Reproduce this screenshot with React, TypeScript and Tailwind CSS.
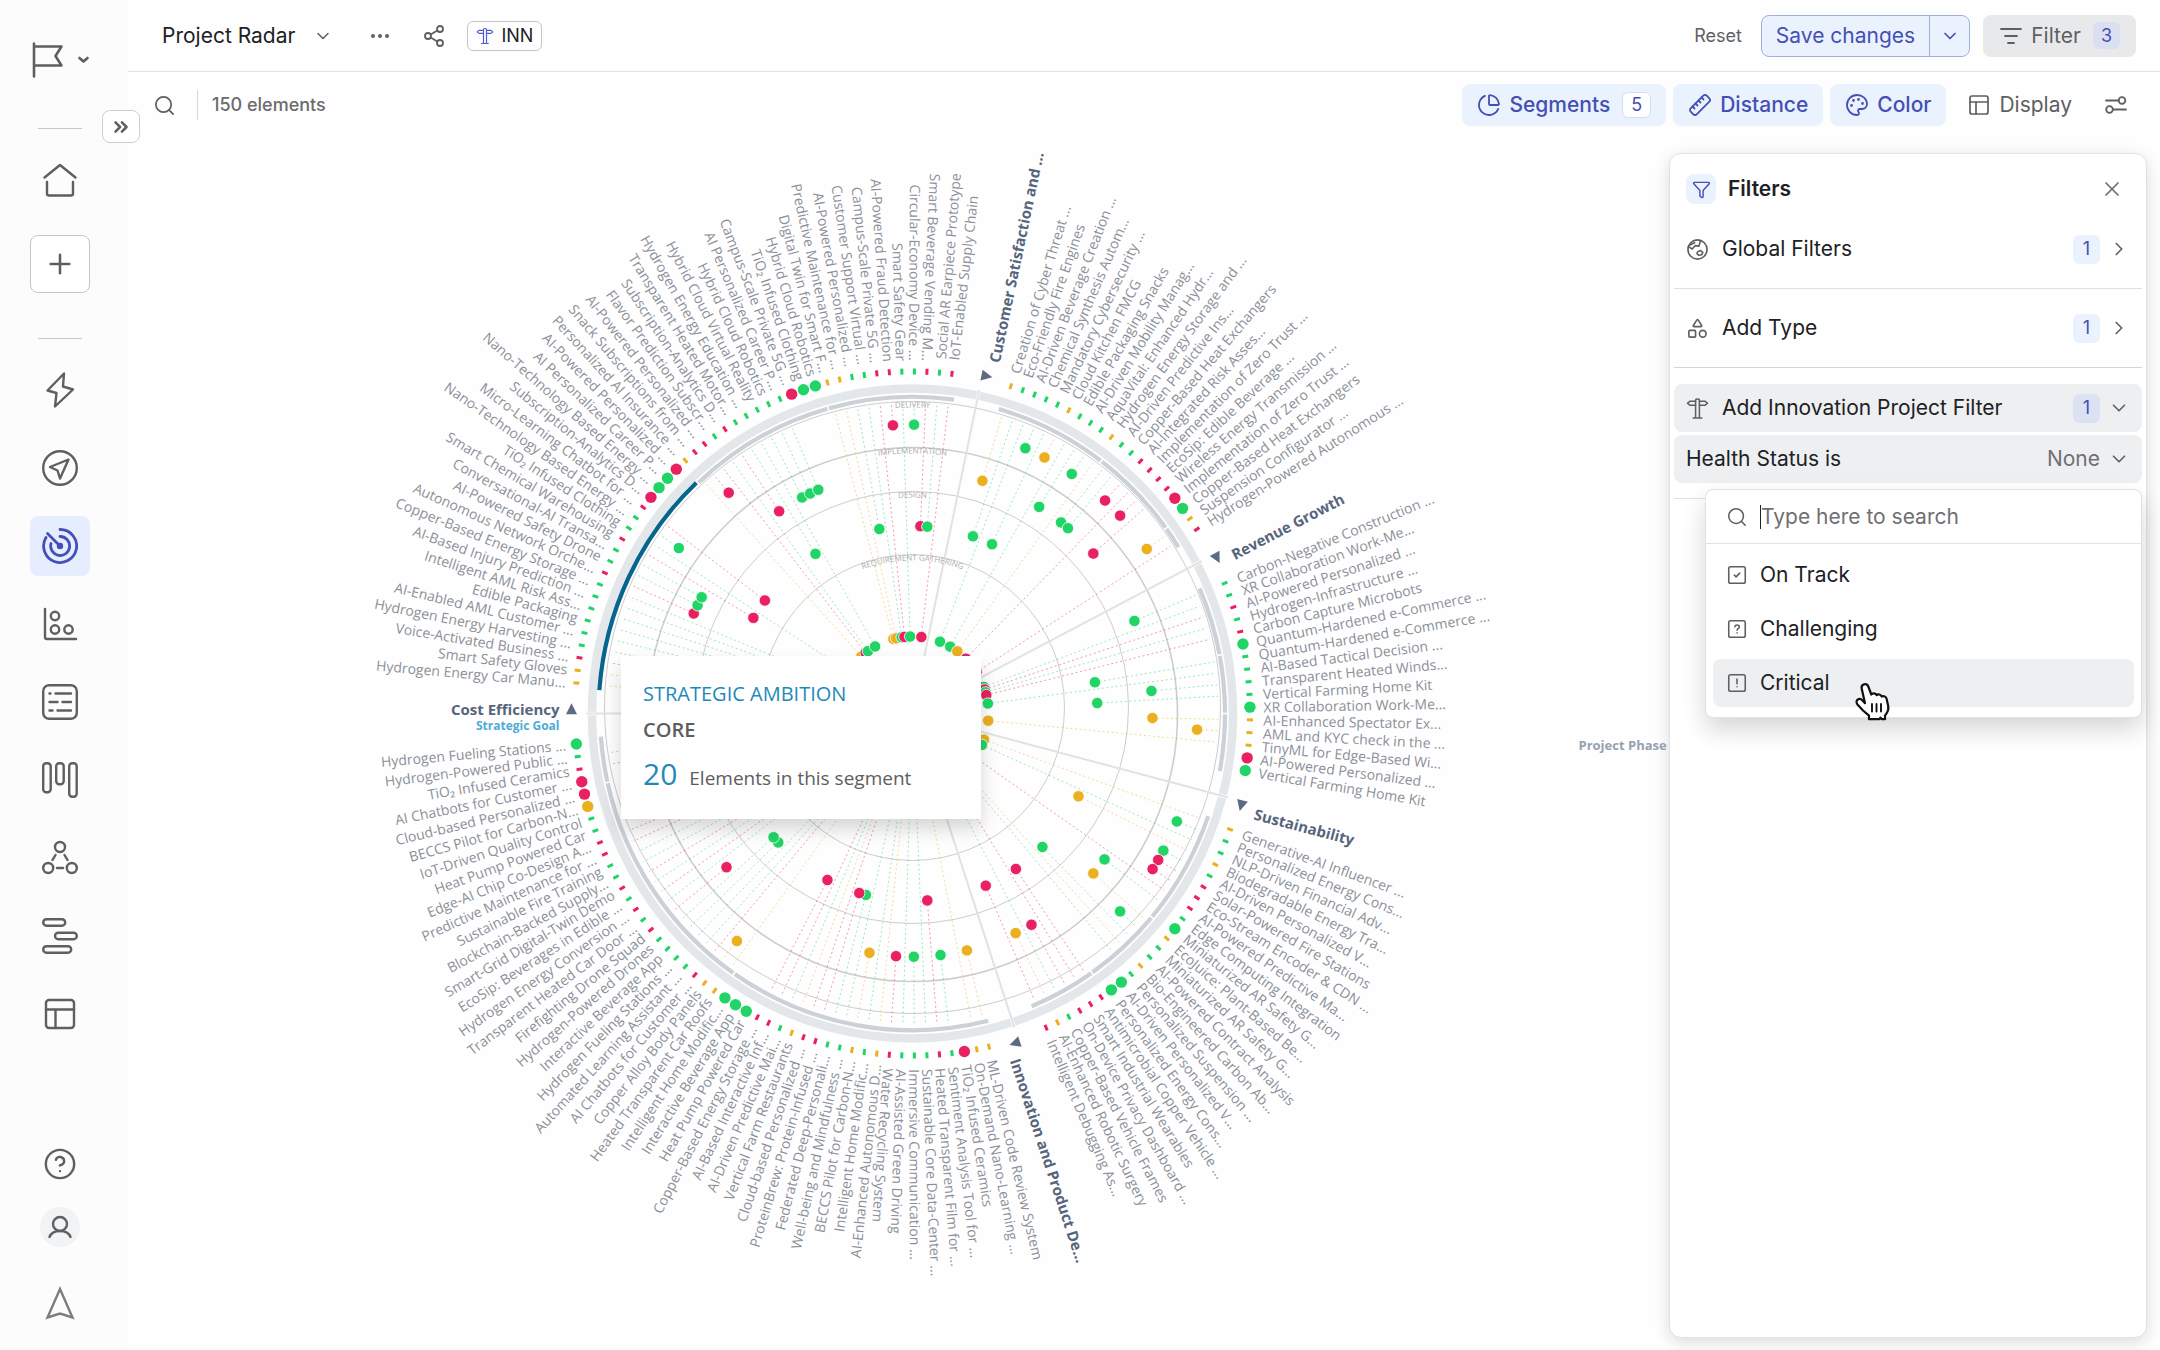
import type { ReactNode } from 'react'
import {
  ChartPie,
  ChevronDown,
  ChevronRight,
  ChevronsRight,
  CircleHelp,
  Ellipsis,
  Filter,
  ListFilter,
  Palette,
  PanelsTopLeft,
  Plus,
  Ruler,
  Search,
  Shapes,
  Share2,
  SquareCheck,
  X,
} from 'lucide-react'

/* ---------- data ---------- */

// status letter: g / r / y. Upper case = the element sits on the outer rim.
// depth: position of the element inside the radar (0 = centre cluster)
type Item = [label: string, status: string, depth?: number]

type Sector = {
  title: string
  splits: number[]
  items: Item[]
}

const DEPTHS = [76, 185, 240, 285]

const SECTORS: Sector[] = [
  {
    title: 'Cost Efficiency',
    splits: [20, 33],
    items: [
      ['Hydrogen Energy Car Manu...', 'y'],
      ['Smart Safety Gloves', 'y'],
      ['Voice-Activated Business ...', 'r'],
      ['Hydrogen Energy Harvesting ...', 'g'],
      ['AI-Enabled AML Customer ...', 'g'],
      ['Edible Packaging', 'g'],
      ['Intelligent AML Risk Ass...', 'g'],
      ['AI-Based Injury Prediction ...', 'g'],
      ['Copper-Based Energy Storage ...', 'g'],
      ['Autonomous Network Orche...', 'r', 2],
      ['AI-Powered Safety Drone', 'g', 2],
      ['Conversational-AI Transa...', 'g', 2],
      ['Smart Chemical Warehousing', 'r', 1],
      ['TiO₂ Infused Clothing', 'g'],
      ['Nano-Technology Based Energy ...', 'g', 3],
      ['Micro-Learning Chatbot for ...', 'r', 1],
      ['Subscription-Analytics D...', 'R'],
      ['Nano-Technology Based Energy ...', 'G'],
      ['AI Personalized Career P...', 'G'],
      ['AI-Powered Personalized ...', 'R'],
      ['Personalized AI Insurance ...', 'y'],
      ['Snack Subscriptions from ...', 'r', 3],
      ['AI-Powered Personalized ...', 'r'],
      ['Flavor Prediction Subscr...', 'g'],
      ['Subscription-Analytics D...', 'r', 2],
      ['Transparent Heated Motor...', 'g', 1],
      ['Hydrogen Energy Education ...', 'g'],
      ['Hybrid Cloud Virtual Reality', 'g', 2],
      ['Hybrid Cloud Robotics', 'g', 2],
      ['AI Personalized Career P...', 'g', 2],
      ['Campus-Scale Private 5G ...', 'R'],
      ['TiO₂ Infused Clothing', 'G'],
      ['Hybrid Cloud Robotics', 'G'],
      ['Digital Twin for Smart F...', 'y'],
      ['Predictive Maintenance for ...', 'y'],
      ['AI-Powered Personalized ...', 'g', 1],
      ['Customer Support Virtual ...', 'g'],
      ['Campus-Scale Private 5G ...', 'r'],
      ['AI-Powered Fraud Detection', 'r', 3],
      ['Smart Safety Gear', 'g'],
      ['Circular-Economy Device ...', 'g', 3],
      ['Smart Beverage Vending M...', 'r', 1],
      ['Social AR Earpiece Prototype', 'g', 1],
      ['IoT-Enabled Supply Chain', 'r'],
    ],
  },
  {
    title: 'Customer Satisfaction and ...',
    splits: [10, 18],
    items: [
      ['Creation of Cyber Threat ...', 'y', 2],
      ['Eco-Friendly Fire Engines', 'g', 1],
      ['AI-Driven Beverage Creation ...', 'g'],
      ['Chemical Synthesis Autom...', 'g', 3],
      ['Mandatory Cybersecurity ...', 'g', 1],
      ['Cloud Kitchen FMCG', 'y', 3],
      ['Edible Packaging Snacks', 'g'],
      ['AI-Driven Mobility Manag...', 'g', 2],
      ['AquaVital: Enhanced Hydr...', 'g', 3],
      ['Hydrogen Energy Storage and ...', 'y'],
      ['AI-Driven Predictive Ins...', 'g', 2],
      ['Copper-Based Heat Exchangers', 'g', 2],
      ['AI-Integrated Risk Asses...', 'r', 3],
      ['Implementation of Zero Trust ...', 'r'],
      ['EcoSip: Edible Beverage ...', 'r', 3],
      ['Wireless Energy Transmission ...', 'r', 2],
      ['Implementation of Zero Trust ...', 'R'],
      ['Copper-Based Heat Exchangers', 'G'],
      ['Suspension Configurator ...', 'y', 3],
      ['Hydrogen-Powered Autonomous ...', 'r'],
    ],
  },
  {
    title: 'Revenue Growth',
    splits: [6, 11],
    items: [
      ['Carbon-Negative Construction ...', 'g', 2],
      ['XR Collaboration Work-Me...', 'g'],
      ['AI-Powered Personalized ...', 'r'],
      ['Hydrogen-Infrastructure ...', 'g'],
      ['Carbon Capture Microbots', 'r'],
      ['Quantum-Hardened e-Commerce ...', 'G'],
      ['Quantum-Hardened e-Commerce ...', 'g', 1],
      ['AI-Based Tactical Decision ...', 'g'],
      ['Transparent Heated Winds...', 'g', 2],
      ['Vertical Farming Home Kit', 'g', 1],
      ['XR Collaboration Work-Me...', 'G'],
      ['AI-Enhanced Spectator Ex...', 'y', 2],
      ['AML and KYC check in the ...', 'y', 3],
      ['TinyML for Edge-Based Wi...', 'y'],
      ['AI-Powered Personalized ...', 'R'],
      ['Vertical Farming Home Kit', 'G'],
    ],
  },
  {
    title: 'Sustainability',
    splits: [10, 17],
    items: [
      ['Generative-AI Influencer ...', 'y'],
      ['Personalized Energy Cons...', 'g', 3],
      ['NLP-Driven Financial Adv...', 'g'],
      ['Biodegradable Energy Tra...', 'y', 1],
      ['AI-Driven Personalized V...', 'g', 3],
      ['Solar-Powered Fire Stations', 'r', 3],
      ['Eco-Stream Encoder & CDN ...', 'r', 3],
      ['AI-Powered Predictive Ma...', 'r'],
      ['Edge Computing Integration', 'g', 2],
      ['Miniaturized AR Safety G...', 'G'],
      ['EcoJuice: Plant-Based Be...', 'y', 2],
      ['Miniaturized AR Safety G...', 'g', 3],
      ['AI-Powered Contract Analysis', 'g', 1],
      ['Bio-Engineered Carbon Ab...', 'y'],
      ['Personalized Suspension ...', 'g'],
      ['AI-Driven Personalized V...', 'G'],
      ['Personalized Energy Cons...', 'G'],
      ['Antimicrobial Copper Vehicle ...', 'r', 1],
      ['Smart Industrial Wearables', 'r'],
      ['On-Device Privacy Dashboard ...', 'r', 2],
      ['Copper-Based Vehicle Frames', 'g'],
      ['AI-Enhanced Robotic Surgery', 'y', 2],
      ['Intelligent Debugging As...', 'r', 1],
    ],
  },
  {
    title: 'Innovation and Product De...',
    splits: [23, 43],
    items: [
      ['ML-Driven Code Review System', 'y', 2],
      ['On-Demand Nano-Learning ...', 'y'],
      ['TiO₂ Infused Ceramics', 'R'],
      ['Sentiment Analysis Tool for ...', 'g', 2],
      ['Heated Transparent Film for ...', 'r', 1],
      ['Sustainable Core Data-Center ...', 'g'],
      ['Immersive Communication ...', 'g', 2],
      ['AI-Assisted Green Driving', 'g'],
      ['Water Recycling System', 'r', 2],
      ['AI-Enhanced Autonomous D...', 'y'],
      ['Intelligent Home Modific...', 'g'],
      ['BECCS Pilot for Carbon-N...', 'y', 2],
      ['Well-being and Mindfulness ...', 'g'],
      ['Federated Deep-Personali...', 'g', 1],
      ['ProteinBrew: Protein-Infused ...', 'r', 1],
      ['Cloud-based Personalized ...', 'r'],
      ['Vertical Farm Restaurants', 'y'],
      ['AI-Driven Predictive Mai...', 'g'],
      ['AI-Based Interactive Inf...', 'r'],
      ['Copper-Based Energy Storage ...', 'r', 1],
      ['Heat Pump Powered Car', 'G'],
      ['Interactive Beverage App', 'G'],
      ['Intelligent Home Modific...', 'G'],
      ['Heated Transparent Car Roofs', 'y'],
      ['Copper Alloy Body Panels', 'y', 3],
      ['AI Chatbots for Customer ...', 'r'],
      ['Automated Learning Assistant ...', 'g'],
      ['Hydrogen Fueling Stations ...', 'g'],
      ['Interactive Beverage App', 'g', 1],
      ['Hydrogen-Powered Drones', 'g', 1],
      ['Firefighting Drone Squad', 'r', 2],
      ['Transparent Heated Car Door ...', 'g'],
      ['Hydrogen Energy Conversion ...', 'r'],
      ['EcoSip: Beverages in Edible ...', 'g'],
      ['Smart-Grid Digital-Twin Demo', 'r'],
      ['Blockchain-Backed Supply...', 'g'],
      ['Sustainable Fire Training', 'g'],
      ['Predictive Maintenance for ...', 'r'],
      ['Edge-AI Chip Co-Design A...', 'r'],
      ['Heat Pump Powered Car', 'g'],
      ['IoT-Driven Quality Control', 'g'],
      ['BECCS Pilot for Carbon-N...', 'Y'],
      ['Cloud-based Personalized ...', 'R'],
      ['AI Chatbots for Customer ...', 'R'],
      ['TiO₂ Infused Ceramics', 'r'],
      ['Hydrogen-Powered Public ...', 'g'],
      ['Hydrogen Fueling Stations ...', 'G'],
    ],
  },
]

const COLORS: Record<string, string> = { g: '#20d566', r: '#e92160', y: '#eab020' }

const RINGS = [
  { id: 'delivery', label: 'DELIVERY', cy: -6, rx: 308, ry: 306, width: 1 },
  { id: 'implementation', label: 'IMPLEMENTATION', cy: 1, rx: 265, ry: 267, width: 1.6 },
  { id: 'design', label: 'DESIGN', cy: -6, rx: 216, ry: 216, width: 1 },
  { id: 'requirement', label: 'REQUIREMENT GATHERING', cy: -6, rx: 152, ry: 153, width: 1 },
]

const OPTIONS = [
  { label: 'On Track', icon: <SquareCheck size={22} strokeWidth={1.7} /> },
  { label: 'Challenging', icon: <SquareMark mark="?" /> },
  { label: 'Critical', icon: <SquareMark mark="!" />, active: true },
]

/* ---------- radar ---------- */

const STEP = 360 / 169
const MARGIN = STEP * 2.4
const FLATTEN = 1.0135

function point(angle: number, radius: number) {
  const rad = (angle * Math.PI) / 180
  return { x: radius * Math.cos(rad), y: radius * FLATTEN * Math.sin(rad) }
}

function arc(from: number, to: number, radius: number) {
  const a = point(from, radius)
  const b = point(to, radius)
  const large = to - from > 180 ? 1 : 0
  return `M${a.x} ${a.y}A${radius} ${radius * FLATTEN} 0 ${large} 1 ${b.x} ${b.y}`
}

function layoutSectors() {
  let start = 180
  return SECTORS.map((sector) => {
    const first = start + MARGIN
    const end = first + (sector.items.length - 1) * STEP + MARGIN
    const placed = { ...sector, start, end, first }
    start = end
    return placed
  })
}

const PLACED = layoutSectors()

// labels left of a slightly tilted axis are flipped so that they stay readable
function isFlipped(angle: number) {
  const a = ((angle + 180) % 360) - 180
  return a < -86.5 || a > 95
}

function Radar() {
  const items = PLACED.flatMap((sector) =>
    sector.items.map(([label, status, depth], i) => ({
      label,
      rim: status !== status.toLowerCase(),
      color: COLORS[status.toLowerCase()],
      radius: DEPTHS[depth ?? 0],
      angle: sector.first + i * STEP,
    })),
  )

  return (
    <svg viewBox="-784.5 -573.5 1541 1210" className="h-full w-full font-['Open_Sans',sans-serif]" role="img" aria-label="Project Radar">
      {RINGS.map((ring) => (
        <g key={ring.id}>
          <ellipse cx={0} cy={ring.cy} rx={ring.rx} ry={ring.ry} fill="none" stroke="#cdcdcd" strokeWidth={ring.width} />
          <path
            id={`ring-${ring.id}`}
            d={`M${-ring.rx + 6} ${ring.cy}A${ring.rx - 6} ${ring.ry - 6} 0 0 1 ${ring.rx - 6} ${ring.cy}`}
            fill="none"
          />
        </g>
      ))}

      {/* dashed guides */}
      {items
        .filter((item) => !item.rim)
        .map((item, i) => {
          const a = point(item.angle, item.radius)
          const b = point(item.angle, 306)
          return (
            <line key={i} x1={a.x} y1={a.y} x2={b.x} y2={b.y} stroke={item.color} strokeWidth={1} strokeDasharray="2 2.6" opacity={0.45} />
          )
        })}

      {/* rim and inner segment arcs */}
      {PLACED.map((sector, s) => {
        const cuts = [0, ...sector.splits, sector.items.length]
        return (
          <g key={sector.title} fill="none">
            <path d={arc(sector.start + 0.3, sector.end - 0.3, 320.5)} stroke="#e3e7ea" strokeWidth={8.5} />
            {cuts.slice(1).map((cut, i) => {
              const active = s === 0 && i === 0
              const from = sector.first + (cuts[i] - 0.5) * STEP + 0.15
              const to = sector.first + (cut - 0.5) * STEP - 0.15
              return (
                <path key={cut} d={arc(from, to, active ? 314 : 312.5)} stroke={active ? '#06658f' : '#cbd1d6'} strokeWidth={4.2} />
              )
            })}
          </g>
        )
      })}
      {PLACED.map((sector) => {
        const b = point(sector.start, 326)
        return <line key={sector.title} x1={0} y1={0} x2={b.x} y2={b.y} stroke="#e1e2e4" strokeWidth={2} />
      })}

      {RINGS.map((ring) => (
        <text key={ring.id} fontSize={8} fill="#adadad" textAnchor="middle">
          <textPath href={`#ring-${ring.id}`} startOffset="50%">
            {ring.label}
          </textPath>
        </text>
      ))}

      {/* elements */}
      {items.map((item, i) => {
        const inner = point(item.angle, item.radius)
        const rim = point(item.angle, 337.5)
        return item.rim ? (
          <circle key={i} cx={rim.x} cy={rim.y} r={5.7} fill={item.color} />
        ) : (
          <g key={i}>
            <circle cx={inner.x} cy={inner.y} r={5.7} fill={item.color} stroke="#fff" strokeWidth={0.8} />
            <rect x={-3} y={-1.5} width={6} height={3} fill={item.color} transform={`translate(${rim.x} ${rim.y}) rotate(${item.angle})`} />
          </g>
        )
      })}

      {items.map((item, i) => {
        const flipped = isFlipped(item.angle)
        const p = point(item.angle, flipped ? 348 : 351)
        return (
          <text
            key={i}
            fontSize={14}
            fill="#8b9099"
            dominantBaseline="central"
            textAnchor={flipped ? 'end' : 'start'}
            transform={`translate(${p.x} ${p.y}) rotate(${flipped ? item.angle + 180 : item.angle})`}
          >
            {item.label}
          </text>
        )
      })}

      {/* sector titles */}
      {PLACED.map((sector, s) => {
        const marker = point(sector.start + 0.7, 341)
        const p = point(sector.start + (s === 0 ? 0.7 : 1.4), s === 0 ? 353 : 356)
        return (
          <g key={sector.title}>
            <path d="M-5 -5.5L6 0L-5 5.5Z" fill="#5d6b82" transform={`translate(${marker.x} ${marker.y}) rotate(${sector.start + 90})`} />
            <text
              fontSize={15}
              fontWeight={700}
              fill="#56647c"
              dominantBaseline="central"
              textAnchor={s === 0 ? 'end' : 'start'}
              transform={`translate(${p.x} ${p.y}) rotate(${s === 0 ? 0 : sector.start})`}
            >
              {sector.title}
            </text>
          </g>
        )
      })}
      <text x={-353} y={16} fontSize={12} fontWeight={700} fill="#4fabd5" textAnchor="end">
        Strategic Goal
      </text>
      <text x={666} y={36} fontSize={13} fontWeight={700} fill="#94a2b0">
        Project Phase
      </text>
    </svg>
  )
}

/* ---------- icons ---------- */

type SvgProps = { size?: number; width?: number; box?: string; stroke?: number; className?: string; children: ReactNode }

function Svg({ size = 36, width, box = '0 0 36 36', stroke = 2.4, className, children }: SvgProps) {
  return (
    <svg
      width={width ?? size}
      height={size}
      viewBox={box}
      fill="none"
      stroke="currentColor"
      strokeWidth={stroke}
      strokeLinecap="round"
      strokeLinejoin="round"
      className={className}
      aria-hidden="true"
    >
      {children}
    </svg>
  )
}

function SquareMark({ mark }: { mark: '?' | '!' }) {
  return (
    <Svg size={22} box="0 0 24 24" stroke={1.7}>
      <rect x="3" y="3" width="18" height="18" rx="2" />
      {mark === '?' ? (
        <path d="M9.600 9.600c.2-1.300 1.200-2 2.400-2 1.400 0 2.500.9 2.500 2.200 0 1.700-2.400 1.900-2.400 3.500M12.100 16.200v.1" />
      ) : (
        <path d="M12 7.800v5M12 16v.1" />
      )}
    </Svg>
  )
}

function SignpostIcon({ size = 22 }: { size?: number }) {
  return (
    <Svg size={size} box="0 0 24 24" stroke={1.6}>
      <path d="M10 22V3.500a1.500 1.500 0 0 1 1.500-1.500h1A1.500 1.500 0 0 1 14 3.500V22M7.500 22h9" />
      <path d="M10 4.500H4L1.500 6.500 4 8.500h6M14 4.500h6l2.500 2L20 8.500h-6" />
    </Svg>
  )
}

function GlobeIcon() {
  return (
    <Svg size={23} box="0 0 24 24" stroke={1.7}>
      <circle cx="12" cy="12" r="10" />
      <path d="M2.500 9l4 2.500 3-3.500 4 .5 1.500-5.500M3.500 7.500L9 5" />
      <path d="M12 14.500l3-1.500 2.500 2-1 2.500-3 .5-2-1.500z" />
    </Svg>
  )
}

const NAV_ICONS: { label: string; active?: boolean; icon: ReactNode }[] = [
  {
    label: 'Activity',
    icon: <Svg><path d="M22 1.500L5.500 18.500 14.500 21 13 34.500 31 17.500 21 14.500z" /></Svg>,
  },
  {
    label: 'Explore',
    icon: (
      <Svg>
        <circle cx="18" cy="18" r="16.800" />
        <path d="M26.500 9.500L8 17l7.500 3.500 2.500 8z" />
      </Svg>
    ),
  },
  {
    label: 'Radar',
    active: true,
    icon: (
      <Svg stroke={2.8}>
        <path d="M18 1.500a16.500 16.500 0 1 1-14 8M18 8.500a9.500 9.500 0 1 1-9 7" />
        <path d="M5.500 5.500L18 18" />
        <circle cx="18" cy="18" r="1.800" fill="currentColor" />
      </Svg>
    ),
  },
  {
    label: 'Bubble chart',
    icon: (
      <Svg>
        <path d="M3 3v28a2 2 0 0 0 2 2h29" />
        <circle cx="13" cy="10" r="4.200" />
        <circle cx="13" cy="23.500" r="4.200" />
        <circle cx="26.500" cy="23.500" r="4.200" />
      </Svg>
    ),
  },
  {
    label: 'List',
    icon: (
      <Svg>
        <rect x="1.200" y="1.200" width="33.600" height="33.600" rx="6" />
        <path d="M7.500 9.500h1M13.500 9.500h15.500M7.500 18h8M20.500 18h8.500M7.500 26.500h3M15.500 26.500h13.500" />
      </Svg>
    ),
  },
  {
    label: 'Board',
    icon: (
      <Svg>
        <rect x="1.200" y="1.200" width="7.500" height="29" rx="3" />
        <rect x="14.200" y="1.200" width="7.500" height="21" rx="3" />
        <rect x="27.200" y="1.200" width="7.500" height="33.600" rx="3" />
      </Svg>
    ),
  },
  {
    label: 'Network',
    icon: (
      <Svg>
        <circle cx="18" cy="7" r="5" />
        <circle cx="6.200" cy="28" r="5" />
        <circle cx="29.800" cy="28" r="5" />
        <path d="M13.500 15l-3 5M22.500 15l3 5M15 28h6" />
      </Svg>
    ),
  },
  {
    label: 'Timeline',
    icon: (
      <Svg>
        <rect x="1.200" y="1.200" width="22" height="6.500" rx="3.200" />
        <rect x="13" y="14.700" width="21.800" height="6.500" rx="3.200" />
        <rect x="1.200" y="28.200" width="28" height="6.500" rx="3.200" />
      </Svg>
    ),
  },
  {
    label: 'Dashboard',
    icon: (
      <Svg>
        <rect x="4" y="4" width="28" height="28" rx="3" />
        <path d="M4 13.500h28M13.500 13.500V32" />
      </Svg>
    ),
  },
]

/* ---------- layout ---------- */

function Sidebar() {
  return (
    <aside className="relative flex w-32 shrink-0 flex-col items-center bg-[#fcfcfd] pr-2 pb-[30px] text-[#5f5f62]">
      <button type="button" aria-label="Workspace" className="mt-9 flex h-12 items-center gap-[14px]">
        <Svg size={36} width={32} box="0 0 32 36" stroke={2.6}>
          <path d="M2 1.500v33M2 4.500h27.500l-6 9.500 6 9.500H2" />
        </Svg>
        <Svg size={8} width={11} box="0 0 11 8" stroke={2.6}>
          <path d="M1.500 2l4 3.500 4-3.500" />
        </Svg>
      </button>
      <div className="mt-11 h-px w-11 bg-[#c9c9cb]" />
      <a href="#home" aria-label="Home" className="mt-[21px] flex size-[60px] items-center justify-center">
        <Svg>
          <path d="M2.500 15.500L18 3l15.500 12.500M5 20v11.500a2 2 0 0 0 2 2h22a2 2 0 0 0 2-2V20" />
        </Svg>
      </a>
      <button
        type="button"
        aria-label="Create"
        className="mt-[25px] flex h-[58px] w-[60px] items-center justify-center rounded-lg border border-[#c6c6c8] bg-white"
      >
        <Plus size={32} strokeWidth={1.9} />
      </button>
      <div className="mt-[45px] h-px w-11 bg-[#c9c9cb]" />
      <nav className="mt-[21px] flex flex-col gap-[18px]">
        {NAV_ICONS.map((item) => (
          <a
            key={item.label}
            href="#view"
            aria-label={item.label}
            className={`flex size-[60px] items-center justify-center rounded-lg ${item.active ? 'bg-[#e6edfe] text-[#4350b8]' : ''}`}
          >
            {item.icon}
          </a>
        ))}
      </nav>
      <button type="button" aria-label="Help" className="mt-auto flex size-12 items-center justify-center">
        <CircleHelp size={34} strokeWidth={1.7} />
      </button>
      <button type="button" aria-label="Account" className="mt-[19px] flex size-10 items-center justify-center rounded-full bg-[#f1f3f4]">
        <Svg size={24} box="0 0 24 24" stroke={2.4}>
          <circle cx="12" cy="9" r="7" />
          <path d="M1.500 22c1.500-4 5-6 10.500-6s9 2 10.500 6" />
        </Svg>
      </button>
      <a href="#about" aria-label="About" className="mt-[39px]">
        <Svg size={34} width={30} box="0 0 30 34" stroke={2.4} className="text-[#7d7d80]">
          <path strokeLinejoin="miter" d="M15 3L2.500 31.500 15 27.500l12.500 4z" />
        </Svg>
      </a>
      <button
        type="button"
        aria-label="Expand sidebar"
        className="absolute top-[110px] left-[102px] flex h-[33px] w-[38px] items-center justify-center rounded-lg border border-[#cfcfd1] bg-white"
      >
        <ChevronsRight size={22} strokeWidth={2.8} />
      </button>
    </aside>
  )
}

function Header() {
  return (
    <header className="flex h-[72px] shrink-0 items-center border-b border-[#e3e3e5] pr-6 pl-[34px] text-[#5f5f62]">
      <button type="button" className="flex items-center gap-[18px] text-[21px] text-[#202124]">
        Project Radar
        <ChevronDown size={20} strokeWidth={1.8} className="text-[#5f5f62]" />
      </button>
      <button type="button" aria-label="More" className="ml-[35px]">
        <Ellipsis size={24} strokeWidth={2} />
      </button>
      <button type="button" aria-label="Share" className="ml-[30px]">
        <Share2 size={24} strokeWidth={1.8} />
      </button>
      <button type="button" className="ml-[21px] flex h-[30px] items-center gap-[7px] rounded-md border border-[#c6c6c8] px-2 text-lg text-[#202124]">
        <span className="text-[#4a5fc9]">
          <SignpostIcon size={18} />
        </span>
        INN
      </button>

      <button type="button" className="ml-auto text-lg">
        Reset
      </button>
      <div className="ml-[19px] flex h-[42px] rounded-lg border border-[#9fb0de] bg-[#eaf2fe] text-[#444fb5]">
        <button type="button" className="px-[14px] text-[21px]">
          Save changes
        </button>
        <button type="button" aria-label="More save options" className="flex w-10 items-center justify-center border-l border-[#9fb0de]">
          <ChevronDown size={20} strokeWidth={2} />
        </button>
      </div>
      <button type="button" className="ml-[13px] flex h-[42px] items-center gap-2 rounded-lg bg-[#e8e9eb] px-4 text-[21px]">
        <ListFilter size={24} strokeWidth={1.8} />
        Filter
        <span className="ml-1 rounded-md bg-[#dae0f2] px-2 text-lg leading-[27px] text-[#444fb5]">3</span>
      </button>
    </header>
  )
}

function Toolbar() {
  const chip = 'flex h-[42px] items-center gap-2 rounded-lg bg-[#eaf2fe] px-[15px] font-medium text-[#444fb5]'
  return (
    <div className="flex h-[68px] shrink-0 items-center pr-8 pb-[2px] pl-[25px] text-[#5f5f62]">
      <button type="button" aria-label="Search">
        <Search size={23} strokeWidth={1.8} />
      </button>
      <div className="ml-[21px] h-[30px] w-px bg-[#d8d8da]" />
      <span className="ml-[14px] text-lg font-medium text-[#6b6b6e]">150 elements</span>
      <div className="ml-auto flex items-center gap-[7px] text-[21px]">
        <button type="button" className={chip}>
          <ChartPie size={24} strokeWidth={1.8} />
          Segments
          <span className="ml-1 rounded-md border border-[#d3ddf3] bg-white px-2 text-lg leading-[24px] font-normal">5</span>
        </button>
        <button type="button" className={chip}>
          <Ruler size={24} strokeWidth={1.8} className="-scale-x-100" />
          Distance
        </button>
        <button type="button" className={chip}>
          <Palette size={24} strokeWidth={1.8} />
          Color
        </button>
        <button type="button" className="ml-[14px] flex items-center gap-2">
          <PanelsTopLeft size={24} strokeWidth={1.7} />
          Display
        </button>
        <button type="button" aria-label="Settings" className="ml-[25px]">
          <Svg size={24} box="0 0 24 24" stroke={1.8}>
            <path d="M2 7.500h12.500M9 16.500h13" />
            <circle cx="18" cy="7.500" r="3.300" />
            <circle cx="5.500" cy="16.500" r="3.300" />
          </Svg>
        </button>
      </div>
    </div>
  )
}

function Badge({ strong }: { strong?: boolean }) {
  return (
    <span className={`flex h-[29px] w-[27px] items-center justify-center rounded-md text-lg text-[#444fb5] ${strong ? 'bg-[#dbe2f4]' : 'bg-[#eaf2fe]'}`}>
      1
    </span>
  )
}

function FilterRow({ icon, label, open }: { icon: ReactNode; label: string; open?: boolean }) {
  return (
    <button
      type="button"
      aria-expanded={Boolean(open)}
      className={`flex h-12 w-full items-center rounded-lg px-3 text-left text-[21px] ${open ? 'bg-[#eeeff1]' : ''}`}
    >
      <span className="text-[#5f5f62]">{icon}</span>
      <span className="ml-[13px] flex-1 text-[#202124]">{label}</span>
      <Badge strong={open} />
      <span className="ml-2 text-[#5f5f62]">
        {open ? <ChevronDown size={22} strokeWidth={1.8} /> : <ChevronRight size={22} strokeWidth={1.8} />}
      </span>
    </button>
  )
}

function StatusMenu() {
  return (
    <div className="absolute top-full right-0 z-10 mt-[6px] w-[437px] rounded-lg border border-[#e1e2e4] bg-white shadow-[0_12px_24px_rgba(0,0,0,0.16)]">
      <label className="flex h-[54px] items-center gap-3 border-b border-[#e1e2e4] pl-5 text-[#5f5f62]">
        <Search size={22} strokeWidth={1.7} />
        <span className="flex flex-1 items-center">
          <span className="h-6 w-px bg-[#202124]" />
          <input
            type="text"
            placeholder="Type here to search"
            aria-label="Type here to search"
            className="w-full bg-transparent text-[21px] outline-none placeholder:text-[#6f6f72]"
          />
        </span>
      </label>
      <ul className="flex flex-col gap-[6px] px-[7px] pt-[7px] pb-[10px]">
        {OPTIONS.map((option) => (
          <li key={option.label}>
            <button
              type="button"
              className={`flex h-12 w-full items-center gap-3 rounded-lg pl-[13px] text-[21px] text-[#202124] ${option.active ? 'bg-[#eeeff1]' : ''}`}
            >
              <span className="text-[#5f5f62]">{option.icon}</span>
              {option.label}
            </button>
          </li>
        ))}
      </ul>
      {/* pointer */}
      <svg width="36" height="40" viewBox="0 0 36 40" className="absolute top-[192px] left-[149px]" aria-hidden="true">
        <path
          d="M8.500 2.500c2-1 4 0 4.800 2l3 8c1.200-1.800 4.500-1.500 5.300.6 1.500-1.400 4.300-.8 5 1.400 2-1 4.500 0 5 2.200l1.600 7.300c.6 3-.3 5.500-1.800 7.600l-1.400 2v3.600h-3.500l-1-1.500-1.500 1.500H14v-3.500L8 28.500l-5.500-6c-1.500-1.800-1.200-4 .3-5 1.500-.9 3.300-.5 4.700 1l2.500 2.700L6.800 7c-.6-2 .2-3.700 1.700-4.500z"
          fill="#fff"
          stroke="#111"
          strokeWidth="2.200"
          strokeLinejoin="round"
        />
        <path d="M17 22v7.500M21.500 22v7.500M26 22v7.500" stroke="#111" strokeWidth="1.900" strokeLinecap="round" />
      </svg>
    </div>
  )
}

function FilterPanel() {
  return (
    <aside className="mt-[13px] mr-[13px] mb-3 w-[478px] shrink-0 rounded-xl border border-[#e1e2e4] bg-white px-1 shadow-[0_4px_16px_rgba(0,0,0,0.14)]">
      <div className="mt-[14px] flex h-[42px] items-center px-3">
        <span className="flex size-[30px] items-center justify-center rounded-lg bg-[#eaf2fe] text-[#444fb5]">
          <Filter size={19} strokeWidth={1.8} />
        </span>
        <h2 className="ml-3 flex-1 text-[21px] font-semibold text-[#202124]">Filters</h2>
        <button type="button" aria-label="Close filters" className="mr-[6px] text-[#6f6f72]">
          <X size={24} strokeWidth={1.7} />
        </button>
      </div>
      <section className="border-b border-[#dfe0e2] py-[15px]">
        <FilterRow icon={<GlobeIcon />} label="Global Filters" />
      </section>
      <section className="border-b border-[#d3d4d6] py-[15px]">
        <FilterRow icon={<Shapes size={23} strokeWidth={1.7} />} label="Add Type" />
      </section>
      <section className="border-b border-[#dfe0e2] pt-4 pb-[15px]">
        <FilterRow icon={<SignpostIcon size={23} />} label="Add Innovation Project Filter" open />
        <div className="relative mt-[3px]">
          <button type="button" aria-haspopup="listbox" className="flex h-12 w-full items-center rounded-lg bg-[#eeeff1] px-3 text-[21px] text-[#202124]">
            <span className="flex-1 text-left">Health Status is</span>
            <span className="text-[#6f6f72]">None</span>
            <ChevronDown size={22} strokeWidth={1.8} className="ml-2 text-[#5f5f62]" />
          </button>
          <StatusMenu />
        </div>
      </section>
    </aside>
  )
}

function SegmentTooltip() {
  return (
    <div className="absolute top-[516px] left-[493px] h-[163px] w-[360px] bg-white pt-[26px] pl-[22px] font-['Open_Sans',sans-serif] text-[#5d5d60] shadow-[0_10px_18px_rgba(0,0,0,0.16)]">
      <p className="text-xl leading-6 text-[#1f8ab8]">STRATEGIC AMBITION</p>
      <p className="mt-3 text-xl leading-6 font-semibold">CORE</p>
      <p className="mt-3 flex items-baseline gap-3 text-[19px] leading-10">
        <span className="text-3xl leading-10 text-[#1f8ab8]">20</span>
        Elements in this segment
      </p>
    </div>
  )
}

export default function App() {
  return (
    <div className="flex h-screen bg-[#fefefe] font-['Inter',sans-serif]">
      <Sidebar />
      <div className="flex min-w-0 flex-1 flex-col">
        <Header />
        <Toolbar />
        <div className="flex min-h-0 flex-1">
          <main className="relative min-w-0 flex-1">
            <Radar />
            <SegmentTooltip />
          </main>
          <FilterPanel />
        </div>
      </div>
    </div>
  )
}
